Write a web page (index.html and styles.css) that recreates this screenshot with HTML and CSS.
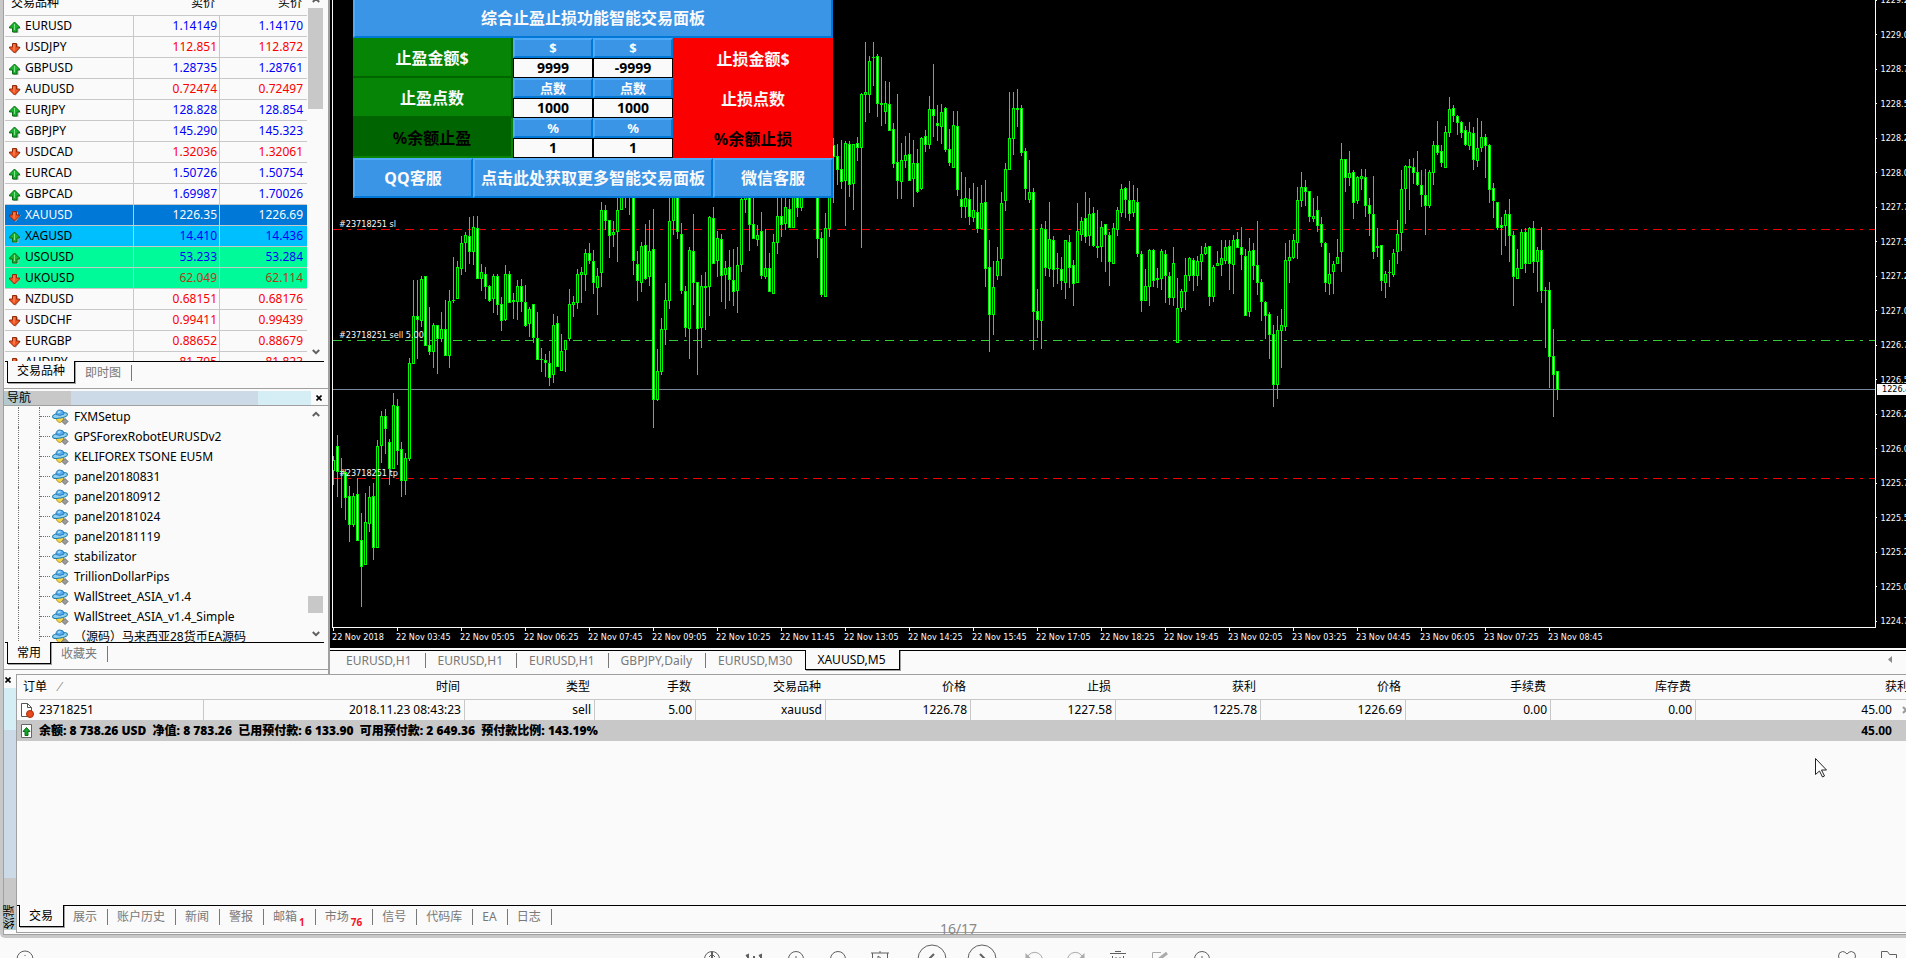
FILE: index.html
```html
<!DOCTYPE html>
<html lang="zh-CN">
<head>
<meta charset="utf-8">
<title>XAUUSD,M5</title>
<link rel="stylesheet" href="styles.css">
</head>
<body>
<svg class="defs" aria-hidden="true">
  <symbol id="up" viewBox="0 0 12 12"><path d="M6.5 2 12 7.5H9.5V12h-5V9" fill="#b4b4b4"/><path d="M5.500 1 10.500 6v1H8v4H3.500V7H.5V6z" fill="#17b52c" stroke="#0b6b14"/><path d="M5.500 3v6" stroke="#7be887"/></symbol>
  <symbol id="down" viewBox="0 0 12 12"><path d="M4 2h5v3h3L6.500 12z" fill="#b4b4b4"/><path d="M3.500 1.500h4V5h3v1l-5 5-5-5V5h3z" fill="#f4531f" stroke="#8e2a0c"/><path d="M5 2.500v6" stroke="#ff9a6d"/></symbol>
  <symbol id="expert" viewBox="0 0 17 16"><path d="M4 8q0 5 4.500 5.500Q12 12 12 7z" fill="#f6d64e" stroke="#b9941b"/><ellipse cx="8" cy="6.500" rx="7.500" ry="2.600" transform="rotate(-10 8 6.500)" fill="#8fd0f2" stroke="#1f7ea8"/><path d="M4 5.500Q4 1 8 1t4 4Q8 7.500 4 5.500z" fill="#58aef0" stroke="#2a7fc0"/><path d="M6 3.500 8.500 2.500" stroke="#b8e2ff" stroke-width="1.500"/><path d="m13 9.500 3 3-3 3-3-3z" fill="#9b9b9b" stroke="#6e6e6e"/></symbol>
  <symbol id="chev-up" viewBox="0 0 8 6"><path d="M.8 5 4 1.800 7.200 5" fill="none" stroke="#606060" stroke-width="2"/></symbol>
  <symbol id="chev-down" viewBox="0 0 8 6"><path d="M.8 1 4 4.200 7.200 1" fill="none" stroke="#606060" stroke-width="2"/></symbol>
  <symbol id="cross" viewBox="0 0 6 6"><path d="m.5.5 5 5m0-5-5 5" stroke="#000" stroke-width="1.600"/></symbol>
</svg>
<div class="app">
  <div class="window">
    <div class="workspace">
      <aside class="side">
        <section class="watch">
          <div class="watch-body">
            <table class="quotes">
              <colgroup><col class="q-name"><col class="q-bid"><col class="q-ask"></colgroup>
              <thead><tr><th>交易品种</th><th>卖价</th><th>买价</th></tr></thead>
              <tbody id="quotes"></tbody>
            </table>
            <div class="scroll">
              <button class="arrow at-edge" aria-label="向上"><svg><use href="#chev-up"/></svg></button>
              <span class="thumb thumb-long"></span>
              <button class="arrow push" aria-label="向下"><svg><use href="#chev-down"/></svg></button>
            </div>
          </div>
          <nav class="tabs"><button class="tab on">交易品种</button><button class="tab">即时图</button></nav>
        </section>
        <section class="navigator">
          <header class="nav-title"><h2>导航</h2><button class="close" aria-label="关闭导航"><svg><use href="#cross"/></svg></button></header>
          <div class="nav-body">
            <ul class="tree" id="tree"></ul>
            <div class="scroll">
              <button class="arrow" aria-label="向上"><svg><use href="#chev-up"/></svg></button>
              <span class="thumb thumb-low"></span>
              <button class="arrow" aria-label="向下"><svg><use href="#chev-down"/></svg></button>
            </div>
          </div>
          <nav class="tabs"><button class="tab on">常用</button><button class="tab">收藏夹</button></nav>
        </section>
      </aside>
      <main class="charts">
        <div class="chart">
          <div class="plot">
            <svg class="candles" id="candles" aria-label="XAUUSD M5" shape-rendering="crispEdges"></svg>
            <span class="order order-sl">#23718251 sl</span>
            <span class="order order-open">#23718251 sell 5.00</span>
            <span class="order order-tp">#23718251 tp</span>
            <form class="panel">
              <button type="button" class="key title">综合止盈止损功能智能交易面板</button>
              <button type="button" class="profit">止盈金额$</button>
              <div class="field"><label class="key" for="a1">$</label><input id="a1" value="9999"></div>
              <div class="field"><label class="key" for="a2">$</label><input id="a2" value="-9999"></div>
              <button type="button" class="loss">止损金额$</button>
              <button type="button" class="profit">止盈点数</button>
              <div class="field"><label class="key" for="b1">点数</label><input id="b1" value="1000"></div>
              <div class="field"><label class="key" for="b2">点数</label><input id="b2" value="1000"></div>
              <button type="button" class="loss">止损点数</button>
              <button type="button" class="profit off">%余额止盈</button>
              <div class="field"><label class="key" for="c1">%</label><input id="c1" value="1"></div>
              <div class="field"><label class="key" for="c2">%</label><input id="c2" value="1"></div>
              <button type="button" class="loss off">%余额止损</button>
              <div class="links">
                <button type="button" class="key">QQ客服</button><button type="button" class="key">点击此处获取更多智能交易面板</button><button type="button" class="key">微信客服</button>
              </div>
            </form>
          </div>
          <div class="prices"><div class="scale" id="scale"></div><span class="current">1226.42</span></div>
          <div class="times" id="times"></div>
        </div>
        <nav class="tabs chart-tabs">
          <button class="tab">EURUSD,H1</button><button class="tab">EURUSD,H1</button><button class="tab">EURUSD,H1</button><button class="tab">GBPJPY,Daily</button><button class="tab last">EURUSD,M30</button><button class="tab on">XAUUSD,M5</button>
          <button class="tab-prev" aria-label="向左"><svg viewBox="0 0 4 7"><path d="M4 0v7L0 3.500z" fill="#8a8a8a"/></svg></button>
        </nav>
      </main>
    </div>
    <section class="terminal">
      <header class="strip"><button class="close" aria-label="关闭终端"><svg><use href="#cross"/></svg></button><h2>终端</h2></header>
      <div class="term-main">
        <div class="term-body">
          <table class="orders">
            <colgroup><col class="c-id"><col class="c-time"><col class="c-type"><col class="c-lots"><col class="c-sym"><col class="c-num"><col class="c-num"><col class="c-num"><col class="c-num"><col class="c-num"><col class="c-num"><col></colgroup>
            <thead><tr><th>订单<i class="sort">⁄</i></th><th>时间</th><th>类型</th><th>手数</th><th>交易品种</th><th>价格</th><th>止损</th><th>获利</th><th>价格</th><th>手续费</th><th>库存费</th><th>获利</th></tr></thead>
            <tbody>
              <tr><td><span class="with-icon"><svg class="doc" viewBox="0 0 14 16"><path d="M1.500 1.500h6l4 4v9h-10z" fill="#fff" stroke="#555"/><path d="M7.500 1.500v4h4" fill="none" stroke="#555"/><circle cx="10" cy="12" r="3.500" fill="#e8481c" stroke="#a62c08"/></svg>23718251</span></td><td>2018.11.23 08:43:23</td><td>sell</td><td>5.00</td><td>xauusd</td><td>1226.78</td><td>1227.58</td><td>1225.78</td><td>1226.69</td><td>0.00</td><td>0.00</td><td>45.00</td></tr>
              <tr class="balance"><td colspan="11"><span class="with-icon"><svg class="doc" viewBox="0 0 14 16"><path d="M1.500 1.500h10v13h-10z" fill="#fff" stroke="#666"/><path d="m6.500 4.500 3.500 4H8v4H5v-4H3z" fill="#13a528" stroke="#0b6b14"/></svg><b>余额: 8 738.26 USD  净值: 8 783.26  已用预付款: 6 133.90  可用预付款: 2 649.36  预付款比例: 143.19%</b></span></td><td>45.00</td></tr>
            </tbody>
          </table>
          <button class="close-order" aria-label="平仓"><svg viewBox="0 0 8 8"><path d="m1 1 6 6m0-6-6 6" stroke="#9a9a9a" stroke-width="2"/></svg></button>
        </div>
        <nav class="tabs term-tabs">
          <button class="tab on">交易</button><button class="tab">展示</button><button class="tab">账户历史</button><button class="tab">新闻</button><button class="tab">警报</button><button class="tab">邮箱<sub>1</sub></button><button class="tab">市场<sub>76</sub></button><button class="tab">信号</button><button class="tab">代码库</button><button class="tab">EA</button><button class="tab">日志</button>
        </nav>
      </div>
    </section>
    <span class="page">16/17</span>
  </div>
  <footer class="viewer">
    <button aria-label="信息"><svg viewBox="0 0 30 30"><circle cx="15" cy="15" r="8"/><path d="M15 11v1M15 14v5"/></svg></button>
    <div class="tools">
      <button aria-label="适应"><svg viewBox="0 0 30 30"><circle cx="15" cy="15" r="7.500"/><path d="M15 8v14" stroke-width="2"/><path d="m12 13 3-3 3 3"/></svg></button>
      <button aria-label="原始大小"><svg viewBox="0 0 30 30"><path d="m7 12 2-1v10M20 12l2-1v10M15 12v2M15 17v2" stroke-width="2"/></svg></button>
      <button aria-label="放大"><svg viewBox="0 0 30 30"><circle cx="15" cy="15" r="7.500"/><path d="M15 12v6M12 15h6"/></svg></button>
      <button aria-label="缩小"><svg viewBox="0 0 30 30"><circle cx="15" cy="15" r="7.500"/><path d="M12 15h6"/></svg></button>
      <button aria-label="幻灯片"><svg viewBox="0 0 30 30"><path d="M6 9h18M7.500 9v11h15V9M15 7v2"/><path d="m13 12 4 3-4 3z"/></svg></button>
      <button class="prev" aria-label="上一张"><svg viewBox="0 0 30 30"><circle cx="15" cy="15" r="14"/><path d="m17 10-5 5 5 5" stroke-width="2"/></svg></button>
      <button class="next" aria-label="下一张"><svg viewBox="0 0 30 30"><circle cx="15" cy="15" r="14"/><path d="m13 10 5 5-5 5" stroke-width="2"/></svg></button>
      <button class="dim" aria-label="左旋"><svg viewBox="0 0 30 30"><path d="M8 14a8 8 0 1 1 2 8"/><path d="M6.500 9v6h6z" fill="#aaa" stroke="none"/></svg></button>
      <button class="dim" aria-label="右旋"><svg viewBox="0 0 30 30"><path d="M22 14a8 8 0 1 0-2 8"/><path d="M23.500 9v6h-6z" fill="#aaa" stroke="none"/></svg></button>
      <button aria-label="删除"><svg viewBox="0 0 30 30"><path d="M7 9.500h16M12 7.500h6"/><path d="M9.500 12v9h11v-9M13 13v5M17 13v5"/></svg></button>
      <button class="dim" aria-label="编辑"><svg viewBox="0 0 30 30"><path d="M16 8.500H7.500v13h13V16"/><path d="m13 16 9-7" stroke-width="3"/></svg></button>
      <button aria-label="更多"><svg viewBox="0 0 30 30"><circle cx="15" cy="15" r="7.500"/><path d="M15 12v3h3"/></svg></button>
    </div>
    <div class="tools ends">
      <button aria-label="收藏"><svg viewBox="0 0 30 30"><path d="M15 10q-2-2.500-4.500-2.500Q6.500 8 6.500 12q0 4 8.500 9 8.500-5 8.500-9 0-4-4-4.500Q17 7.500 15 10z"/></svg></button>
      <button aria-label="文件夹"><svg viewBox="0 0 30 30"><path d="M7.500 21V7.500h6l2 3h7V21z"/></svg></button>
    </div>
  </footer>
  <svg class="cursor" viewBox="0 0 13 20" aria-hidden="true"><path d="M.5.500v16l4-3.500 3 6 2-1-3-6h5z" fill="#fff" stroke="#222"/></svg>
</div>
<script src="app.js"></script>
</body>
</html>
```
FILE: styles.css
```css
* { box-sizing: border-box; }
body {
  margin: 0;
  height: 100vh;
  overflow: hidden;
  background: #fafafa;
  color: #000;
  font: 12px/16px "Noto Sans", "Noto Sans CJK SC", sans-serif;
}
button { font: inherit; color: inherit; background: none; border: 0; padding: 0; margin: 0; }
h2 { margin: 0; font-size: 12px; font-weight: 400; }
.defs { position: absolute; width: 0; height: 0; }

/* The window runs a little past the right and bottom edges of the view. */
.app {
  position: relative;
  display: flex;
  flex-direction: column;
  width: calc(100% + 8px);
  height: calc(100vh + 22px);
}
.window {
  position: relative;
  flex: 1;
  min-height: 0;
  display: grid;
  grid-template-rows: minmax(0, 674fr) minmax(0, 261fr);
  border: solid #c8c8c8;
  border-width: 0 0 3px 3px;
  border-bottom-left-radius: 5px;
}
.workspace {
  display: grid;
  grid-template-columns: 326px minmax(0, 1fr);
  border-left: 1px solid #a0a0a0;
}

/* Tabs */
.tabs { display: flex; align-items: flex-start; height: 27px; padding-left: 2px; border-top: 1px solid #000; }
.tab {
  height: 16px;
  margin-top: 3px;
  padding: 0 10px;
  border-right: 1px solid #787878;
  color: #787878;
  line-height: 14px;
  white-space: nowrap;
}
.tab.on {
  height: 22px;
  margin-top: -1px;
  padding: 0 9px;
  border: 1px solid #000;
  border-top: 0;
  background: #fafafa;
  color: #000;
  box-shadow: 1px 1px 0 #a0a0a0;
}
.tab.last { border-right: 0; }
.tab sub { margin-left: 2px; color: #f5142d; font-size: 10px; font-weight: 700; line-height: 0; vertical-align: -5px; }

/* Side panels */
.side { display: flex; flex-direction: column; border-right: 2px solid #a0a0a0; padding-bottom: 4px; min-height: 0; }
.watch { flex: 389; min-height: 0; display: flex; flex-direction: column; border-bottom: 1px solid #a0a0a0; }
.watch-body, .nav-body { flex: 1; min-height: 0; display: flex; overflow: hidden; }
.watch-body { padding-left: 1px; }
.watch .tabs, .navigator .tabs { margin: 0 4px 0 1px; }
.quotes { flex: none; width: 302px; height: max-content; margin-top: -9px; table-layout: fixed; border-spacing: 0; }
.q-name { width: 129px; }
.q-bid { width: 86px; }
.quotes th, .quotes td { height: 21px; padding: 0 2px 0 0; border-bottom: 1px solid #c8c8c8; text-align: right; font-weight: 400; }
.quotes th { height: 25px; padding-right: 5px; }
.quotes th:first-child { padding-left: 6px; text-align: left; }
.quotes td { border-right: 1px solid #c8c8c8; }
.quotes td:first-child { text-align: left; padding-left: 4px; }
.quotes td:last-child { border-right: 0; padding-right: 4px; }
.quotes svg { width: 12px; height: 12px; margin-right: 4px; vertical-align: -3px; }
.rise td + td { color: #0000fa; }
.fall td + td { color: #fa0000; }
.quotes .gold td { background: #0078d7; color: #fafafa; }
.quotes .silver td { background: #00bfff; }
.quotes .oil td { background: #00fa9a; }
.oil.fall td + td { color: #b43c14; }

.scroll { width: 15px; margin-left: 1px; display: flex; flex-direction: column; align-items: center; }
.arrow { flex: none; display: flex; width: 15px; height: 17px; align-items: center; justify-content: center; }
.arrow svg { width: 8px; height: 6px; }
.at-edge { height: 8px; align-items: flex-start; margin-top: -3px; }
.at-edge + .thumb { margin-top: 3px; }
.push { margin-top: auto; }
.thumb { width: 15px; background: #c8c8c8; }
.thumb-long { height: 101px; }
.thumb-low { height: 17px; margin: auto 0 12px; }

.navigator { flex: 279; min-height: 0; margin-top: 2px; display: flex; flex-direction: column; border-bottom: 1px solid #a0a0a0; }
.nav-title {
  flex: none;
  display: flex;
  justify-content: space-between;
  align-items: center;
  height: 15px;
  padding: 0 6px 0 3px;
  border-bottom: 1px solid #a0a0a0;
  background: linear-gradient(90deg, #b4c9ce 0 26px, #c8c8c8 26px 67px, #ccd9e6 67px 254px, #d5eef5 254px 307px, #fafafa 307px);
}
.close { display: flex; }
.close svg { width: 6px; height: 6px; }
.tree {
  flex: none;
  width: 303px;
  height: 100%;
  margin: 0;
  padding: 1px 0 0 14px;
  list-style: none;
  overflow: hidden;
}
.tree li {
  display: flex;
  align-items: center;
  height: 20px;
  padding-left: 20px;
  border-left: 1px dotted #707070;
  white-space: nowrap;
}
.tree li::before { content: ""; align-self: stretch; border-left: 1px dotted #707070; }
.tree .branch { width: 10px; border-top: 1px dotted #707070; }
.tree svg { width: 17px; height: 16px; margin: 0 5px 0 2px; }

/* Charts */
.charts { display: flex; flex-direction: column; min-width: 0; min-height: 0; }
.chart {
  flex: 1;
  min-height: 0;
  display: grid;
  grid-template: minmax(0, 1fr) 20px / minmax(0, 1fr) 38px;
  padding-left: 2px;
  background: #000;
  color: #fafafa;
  font: 9px/12px "DejaVu Sans Condensed", "DejaVu Sans", sans-serif;
}
.plot { position: relative; border: solid #fafafa; border-width: 0 1px 1px; overflow: hidden; }
.candles { position: absolute; inset: 0; width: 100%; height: 100%; }
.order { position: absolute; left: 6px; }
.order-sl { top: 218px; }
.order-open { top: 329px; }
.order-tp { top: 467px; }
.prices { position: relative; overflow: hidden; }
.scale { display: flex; flex-direction: column; justify-content: space-between; height: 633px; margin-top: -6px; }
.scale span { display: flex; align-items: center; gap: 4px; }
.scale span::before { content: ""; width: 2px; height: 1px; background: #fafafa; }
.current { position: absolute; top: 384px; left: 1px; width: 37px; padding-left: 5px; background: #fafafa; color: #000; line-height: 11px; }
.times { grid-column: 1 / -1; display: flex; overflow: hidden; padding-left: 1px; }
.times span { flex: none; width: 64px; margin-left: -1px; margin-right: 1px; white-space: nowrap; }
.times span::before { content: ""; display: block; width: 1px; height: 3px; margin: 0 0 0 1px; background: #fafafa; }
.chart-tabs { flex: none; height: 24px; margin-top: 2px; padding-left: 4px; }
.chart-tabs .tab { height: 15px; padding: 0 13px 0 12px; margin-top: 2px; line-height: 16px; }
.chart-tabs .tab.on { height: 20px; margin-top: -1px; padding: 0 13px 0 11px; }
.term-tabs .tab { padding: 0 10px 0 9px; }
.tab-prev { display: flex; margin: 5px 22px 0 auto; }
.tab-prev svg { width: 4px; height: 7px; }

/* Trade panel floating over the chart */
.panel {
  position: absolute;
  top: -2px;
  left: 20px;
  width: 480px;
  display: grid;
  grid-template-columns: 160px 80px 80px 160px;
  grid-auto-rows: 40px;
  font: 700 16px/20px "Noto Sans", "Noto Sans CJK SC", sans-serif;
}
.key { border: 2px solid; border-color: #4fabf8 #0078d7 #0078d7 #4fabf8; background: #3a95e6; color: #fafafa; text-align: center; white-space: nowrap; }
.title, .links { grid-column: 1 / -1; }
.profit, .loss { padding-top: 2px; }
.profit { background: #058405; border: solid #006400; border-width: 0 2px 2px 0; color: #fafafa; }
.profit.off { background: #006400; border-color: #058405; color: #000; }
.loss { background: #fa0000; color: #fafafa; }
.loss.off { color: #000; }
.field { display: grid; grid-template-rows: 20px 20px; font-size: 13px; line-height: 16px; }
.field input { width: 100%; min-width: 0; padding: 0; border: 1px solid #000; background: #fafafa; color: #000; text-align: center; font: inherit; font-size: 14px; }
.links { display: grid; grid-template-columns: 1fr 2fr 1fr; }

/* Terminal */
.terminal { display: grid; grid-template-columns: 12px minmax(0, 1fr); border: solid #a0a0a0; border-width: 0 0 1px 1px; padding-bottom: 1px; }
.strip {
  display: flex;
  flex-direction: column;
  justify-content: space-between;
  align-items: center;
  padding: 3px 0 1px;
  margin-bottom: 3px;
  background: linear-gradient(#fafafa 0 14px, #d5eef5 14px 56px, #ccd9e6 56px 204px, #c8c8c8 204px 240px, #b4c9ce 240px);
}
.strip h2 { writing-mode: vertical-rl; transform: rotate(180deg); line-height: 12px; }
.strip .close { margin-right: 4px; }
.term-main { display: flex; flex-direction: column; min-width: 0; border: solid #a0a0a0; border-width: 1px 0 1px 1px; }
.term-body { position: relative; flex: 1; min-height: 0; }
.orders { width: 100%; table-layout: fixed; border-spacing: 0; }
.c-id { width: 187px; }
.c-time { width: 261px; }
.c-type, .c-sym { width: 130px; }
.c-lots { width: 101px; }
.c-num { width: 145px; }
.orders th, .orders td { padding: 0 3px 0 0; height: 20px; text-align: right; font-weight: 400; white-space: nowrap; }
.orders th { height: 25px; border-bottom: 1px solid #c8c8c8; padding-right: 5px; }
.orders td { border-right: 1px solid #c8c8c8; }
.orders th:first-child { padding-left: 6px; text-align: left; }
.orders td:first-child { padding-left: 3px; text-align: left; }
.orders td:last-child { border-right: 0; padding-right: 22px; }
.sort { margin-left: 12px; color: #909090; }
.with-icon { display: flex; align-items: center; gap: 5px; }
.doc { width: 14px; height: 16px; }
.balance { background: #c8c8c8; }
.orders .balance td { height: 21px; font-weight: 700; }
.balance b { white-space: pre; }
.close-order { position: absolute; top: 31px; right: 4px; display: flex; }
.close-order svg { width: 8px; height: 8px; }
.page { position: absolute; left: 0; right: 0; bottom: -2px; text-align: center; font-size: 14px; color: #888; pointer-events: none; }

/* Image viewer bar */
.viewer { flex: none; display: grid; grid-template-columns: 1fr auto 1fr; align-items: center; height: 42px; padding: 0 10px; }
.viewer svg { display: block; width: 30px; height: 30px; fill: none; stroke: #606060; stroke-width: 1; }
.viewer .dim svg { stroke: #aaa; }
.viewer > button { justify-self: start; }
.tools { display: flex; gap: 12px; }
.tools .prev { margin: 0 4px 0 10px; }
.tools .next { margin: 0 10px 0 4px; }
.ends { justify-self: end; }
.cursor { position: absolute; left: 1815px; top: 758px; width: 13px; height: 20px; }
```
FILE: app.js
```js
const quotes = [
  ["EURUSD", "1.14149", "1.14170", "rise"], ["USDJPY", "112.851", "112.872", "fall"],
  ["GBPUSD", "1.28735", "1.28761", "rise"], ["AUDUSD", "0.72474", "0.72497", "fall"],
  ["EURJPY", "128.828", "128.854", "rise"], ["GBPJPY", "145.290", "145.323", "rise"],
  ["USDCAD", "1.32036", "1.32061", "fall"], ["EURCAD", "1.50726", "1.50754", "rise"],
  ["GBPCAD", "1.69987", "1.70026", "rise"], ["XAUUSD", "1226.35", "1226.69", "fall gold"],
  ["XAGUSD", "14.410", "14.436", "rise silver"], ["USOUSD", "53.233", "53.284", "rise oil"],
  ["UKOUSD", "62.049", "62.114", "fall oil"], ["NZDUSD", "0.68151", "0.68176", "fall"],
  ["USDCHF", "0.99411", "0.99439", "fall"], ["EURGBP", "0.88652", "0.88679", "fall"],
  ["AUDJPY", "81.795", "81.823", "fall"]
];
document.getElementById("quotes").innerHTML = quotes.map(([name, bid, ask, cls]) =>
  `<tr class="${cls}"><td><svg><use href="#${cls.startsWith("rise") ? "up" : "down"}"/></svg>${name}</td><td>${bid}</td><td>${ask}</td></tr>`).join("");

const experts = ["FXMSetup", "GPSForexRobotEURUSDv2", "KELIFOREX TSONE EU5M", "panel20180831", "panel20180912",
  "panel20181024", "panel20181119", "stabilizator", "TrillionDollarPips", "WallStreet_ASIA_v1.4",
  "WallStreet_ASIA_v1.4_Simple", "（源码）马来西亚28货币EA源码"];
document.getElementById("tree").innerHTML = experts.map(n =>
  `<li><span class="branch"></span><svg><use href="#expert"/></svg>${n}</li>`).join("");

const times = ["22 Nov 2018", "22 Nov 03:45", "22 Nov 05:05", "22 Nov 06:25", "22 Nov 07:45", "22 Nov 09:05",
  "22 Nov 10:25", "22 Nov 11:45", "22 Nov 13:05", "22 Nov 14:25", "22 Nov 15:45", "22 Nov 17:05", "22 Nov 18:25",
  "22 Nov 19:45", "23 Nov 02:05", "23 Nov 03:25", "23 Nov 04:45", "23 Nov 06:05", "23 Nov 07:25", "23 Nov 08:45"];
document.getElementById("times").innerHTML = times.map(t => `<span>${t}</span>`).join("");

let scale = "";
for (let p = 1229.25; p >= 1224.75; p -= 0.25) scale += `<span>${p.toFixed(2)}</span>`;
document.getElementById("scale").innerHTML = scale;

// Each candle: high, body top, body bottom, low, bearish (1) or bullish (0).
const candles = `456,460,471,485,0 435,446,472,497,1 458,471,472,508,1 469,472,498,520,1 486,496,525,542,1 493,496,525,527,0
478,494,541,541,1 513,540,567,607,1 493,522,565,565,0 486,497,524,532,0 483,496,548,560,1 440,446,548,548,0
411,416,446,463,0 409,416,429,454,1 439,442,469,485,1 393,405,469,469,0 399,406,451,465,1 442,449,481,497,1
453,458,481,495,0 358,363,459,461,0 280,316,364,364,0 280,316,320,359,1 276,279,321,327,0 276,276,346,346,1
307,345,352,355,1 323,325,352,368,0 325,325,339,374,1 312,329,339,342,0 300,329,356,356,1 290,301,356,368,0
257,300,301,303,0 261,267,299,299,0 236,243,269,275,0 232,235,243,272,0 217,236,252,264,1 216,227,252,265,0
216,228,279,279,1 264,272,279,291,0 267,274,287,299,1 285,286,301,302,1 274,276,299,313,0 274,276,305,315,1
297,304,321,331,1 265,274,320,321,0 271,274,303,303,1 293,300,302,319,1 280,286,302,320,0 279,286,302,312,1
285,302,326,327,1 307,309,324,337,0 304,304,338,343,1 312,338,360,360,1 348,359,360,372,1 354,360,363,377,1
351,363,378,386,1 314,325,375,383,0 316,323,367,367,1 334,351,371,371,0 340,340,350,372,0 289,304,339,341,0
296,302,305,317,0 269,274,303,309,0 267,272,275,303,0 249,253,275,291,0 243,253,261,264,1 250,261,283,294,1
268,276,288,315,0 202,210,273,287,0 205,210,221,230,1 220,220,236,258,1 221,232,235,247,0 190,210,232,262,0
190,192,210,210,0 190,191,192,208,0 190,191,192,215,0 190,191,261,275,1 251,264,281,301,1 242,246,283,292,0
224,245,279,280,1 220,251,277,286,0 209,249,400,428,1 349,371,400,401,0 318,329,372,375,0 283,300,330,345,0
190,221,301,309,0 190,192,221,235,0 190,192,232,239,1 223,234,291,294,1 286,291,328,337,1 247,250,329,359,0
214,251,283,305,1 282,282,329,375,1 275,286,328,348,0 272,286,288,330,0 216,217,287,316,0 207,218,264,264,1
231,238,261,277,0 234,239,276,302,1 261,268,275,309,0 250,267,280,301,1 249,280,292,306,1 247,265,291,313,0
190,199,265,272,0 190,192,200,213,0 190,192,225,251,1 190,224,239,239,1 225,235,240,246,0 212,231,276,279,1
229,268,277,279,0 253,268,292,292,1 234,242,294,294,0 190,216,243,254,0 190,216,225,237,1 190,207,224,230,0
199,209,228,228,1 190,192,228,228,0 190,192,208,217,1 190,192,208,211,0 170,175,185,190,1 170,175,185,190,0
170,175,185,190,1 190,192,239,258,1 232,238,295,297,1 213,228,297,297,0 190,192,229,237,0 138,145,157,203,1
144,156,170,185,1 140,169,182,189,1 141,143,181,226,0 141,144,185,197,1 144,144,184,210,0 137,143,148,161,1
93,94,148,248,0 42,92,95,122,0 56,61,95,113,0 42,57,58,86,1 54,56,104,117,1 57,103,105,126,1
81,103,112,124,0 82,104,131,131,1 123,129,164,168,1 94,162,181,199,1 143,160,182,199,0 136,155,161,168,0
133,154,181,181,1 140,163,179,207,0 149,163,192,193,1 137,138,189,190,0 130,136,145,152,1 96,109,145,149,0
64,109,116,137,1 105,123,126,141,1 104,112,127,144,0 107,108,150,152,1 129,149,163,166,1 111,125,168,168,0
111,126,190,196,1 172,199,207,218,1 177,198,207,218,0 188,199,217,225,1 183,210,218,222,0 187,212,229,233,1
185,203,229,229,0 180,202,269,287,1 240,267,315,352,1 261,287,315,335,0 247,261,276,280,0 192,203,259,276,0
163,169,201,211,0 92,138,170,170,0 92,108,139,155,0 89,108,110,127,1 105,108,153,156,1 148,151,189,200,1
160,192,200,203,0 188,192,312,350,1 289,311,320,338,1 224,228,321,349,0 221,229,268,276,1 202,239,269,277,0
236,240,270,287,1 253,268,269,284,1 257,269,281,290,1 240,240,283,299,0 235,242,268,288,1 260,265,284,306,1
203,231,283,283,0 217,221,235,241,0 192,218,237,243,1 198,214,236,246,0 207,213,246,247,1 210,246,248,258,1
221,227,247,262,0 224,224,235,272,1 232,235,262,286,1 223,228,264,264,0 207,210,230,236,0 184,189,213,217,0
187,188,200,218,1 181,200,214,221,1 185,200,213,217,0 188,202,254,257,1 251,254,301,312,1 269,286,301,301,0
249,250,287,306,0 249,250,281,287,1 268,278,280,288,1 249,251,279,290,0 250,254,276,303,1 272,276,298,305,1
247,263,298,306,0 278,308,343,343,0 289,291,308,312,0 258,275,292,310,0 257,258,276,281,0 258,260,276,291,1
256,261,276,286,0 246,254,262,280,0 243,247,254,255,0 246,246,297,306,1 265,267,297,302,0 251,263,266,266,0
240,258,265,276,0 240,247,261,264,0 240,246,264,290,1 235,240,265,294,0 232,239,248,248,1 227,247,255,270,1
249,256,316,316,1 238,251,312,317,0 243,250,266,280,1 221,265,283,295,1 279,282,302,321,1 301,302,316,339,1
312,314,335,359,1 325,334,385,407,1 316,330,385,399,0 309,325,331,368,0 243,260,327,331,0 240,257,261,283,0
234,240,258,259,0 187,200,243,259,0 172,187,201,207,0 180,187,192,206,1 191,191,217,222,1 198,216,219,222,0
196,210,226,232,1 217,224,243,247,1 242,243,283,292,1 253,274,284,295,0 261,264,272,294,0 239,257,264,264,0
143,159,252,272,0 159,159,178,192,1 151,173,178,186,0 170,172,203,219,1 176,177,201,204,0 169,176,179,190,0
169,177,206,217,1 198,205,214,236,1 176,214,252,259,1 228,246,248,257,1 245,245,281,291,1 271,274,283,298,0
260,272,273,287,0 249,253,275,277,0 220,234,252,264,0 170,189,233,251,0 165,166,189,224,0 159,166,168,210,1
158,167,173,184,1 151,172,185,186,1 170,185,195,207,1 169,195,206,235,1 170,172,206,208,0 141,145,173,185,0
121,145,153,155,1 145,151,163,167,1 126,132,168,168,0 97,109,133,137,0 105,108,116,122,1 115,116,123,135,1
121,122,133,138,1 126,130,145,146,1 122,132,146,150,0 127,133,160,170,1 118,148,161,167,0 121,137,148,152,0
134,137,146,178,1 144,145,190,203,1 183,188,201,218,1 202,202,228,230,1 217,225,228,255,1 210,214,226,246,0
199,214,236,262,1 231,235,277,306,1 249,268,279,279,0 229,232,269,269,0 228,232,264,273,1 227,228,264,264,0
221,228,262,273,1 247,250,262,292,0 227,250,291,303,1 287,290,291,348,0 282,290,357,388,1 329,356,375,417,1
371,371,390,400,1`.split(/\s+/).map(c => c.split(",").map(Number));

const level = (y, color, dash) =>
  `<line x1="0" x2="100%" y1="${y}.5" y2="${y}.5" stroke="${color}"${dash ? ' stroke-dasharray="9 6 3 6"' : ""}/>`;
let art = level(229, "#f00000", true) + level(340, "#32cd32", true) + level(478, "#f00000", true) + level(389, "#778899", false);
candles.forEach(([high, top, bottom, low, bear], i) => {
  const x = i * 4;
  art += `<rect x="${x}" y="${high}" width="1" height="${Math.max(1, low - high)}" fill="#00fa00"/>`;
  art += `<rect x="${x - 1}" y="${top}" width="3" height="${Math.max(1, bottom - top)}" fill="#00fa00"/>`;
  if (bottom - top > 2) {
    art += `<rect x="${x}" y="${top + 1}" width="1" height="${bottom - top - 2}" fill="${bear ? "#fafafa" : "#000"}"/>`;
  }
});
document.getElementById("candles").innerHTML = art;
```
